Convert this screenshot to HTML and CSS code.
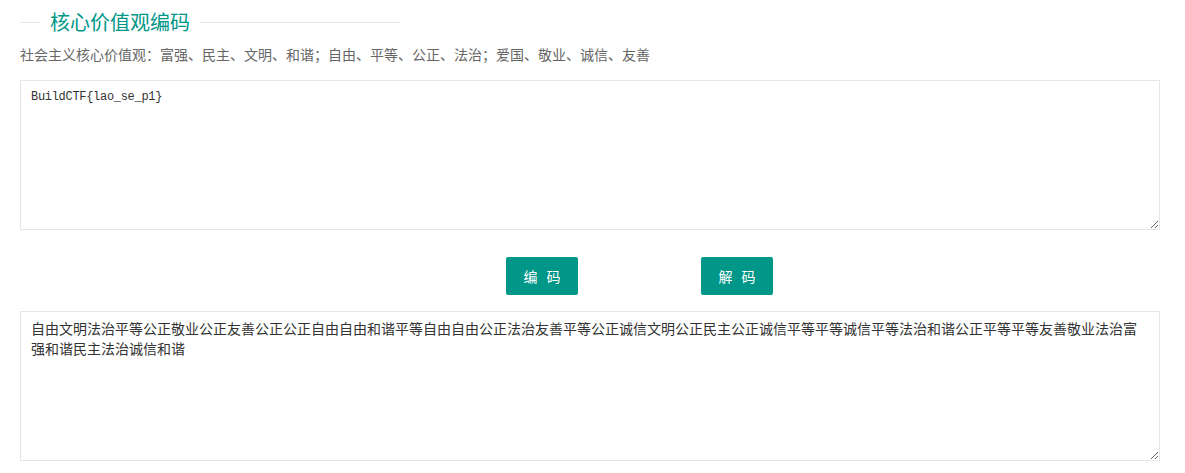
FILE: index.html
```html
<html>
<head>
    <meta http-equiv="Content-Type" content="text/html; charset=utf-8"/>
<link rel="stylesheet" href="styles.css">
</head>
<body>
<div class="content">
<div class="title">
    <span class="line short"></span>
    <h1>核心价值观编码</h1>
    <span class="line"></span>
</div>
<p class="about">社会主义核心价值观：富强、民主、文明、和谐；自由、平等、公正、法治；爱国、敬业、诚信、友善</p>
<textarea class="box plain">BuildCTF{lao_se_p1}</textarea>
<div class="btns">
    <button class="btn">编码</button>
    <button class="btn">解码</button>
</div>
<textarea class="box">自由文明法治平等公正敬业公正友善公正公正自由自由和谐平等自由自由公正法治友善平等公正诚信文明公正民主公正诚信平等平等诚信平等法治和谐公正平等平等友善敬业法治富强和谐民主法治诚信和谐</textarea>
</div>
</body>
</html>
```

FILE: styles.css
```css
body{
padding:0;margin:0;
font-family:"Noto Sans CJK SC",sans-serif;
color:#333;
background:#fff;
}
.content{
padding:7px 0 0 20px;
width:1140px;
}
.title{
display:flex;
align-items:center;
width:380px;
height:30px;
}
.line{
flex:1;
height:1px;
background:#e6e6e6;
}
.line.short{
flex:none;
width:20px;
}
h1{
margin:0;
padding:0 10px;
font-size:20px;
font-weight:normal;
line-height:30px;
color:#009688;
}
.about{
margin:7px 0 16px;
font-size:14px;
line-height:20px;
color:#666;
}
.box{
display:block;
box-sizing:border-box;
width:1140px;
height:150px;
margin:0;
padding:6px 10px;
border:1px solid #e6e6e6;
border-radius:0;
font-family:"Noto Sans CJK SC",sans-serif;
font-size:14px;
line-height:20px;
color:#333;
outline:none;
}
.box.plain{
font-family:"Liberation Mono",monospace;
font-size:12px;
letter-spacing:-0.3px;
color:#333;
}
.btns{
display:flex;
gap:123px;
padding:27px 0 16px 486px;
}
.btn{
width:72px;
height:38px;
padding:0 0 0 9px;
border:0;
border-radius:2px;
background:#009688;
color:#fff;
font-family:"Noto Sans CJK SC",sans-serif;
font-size:14px;
letter-spacing:9px;
}
```
